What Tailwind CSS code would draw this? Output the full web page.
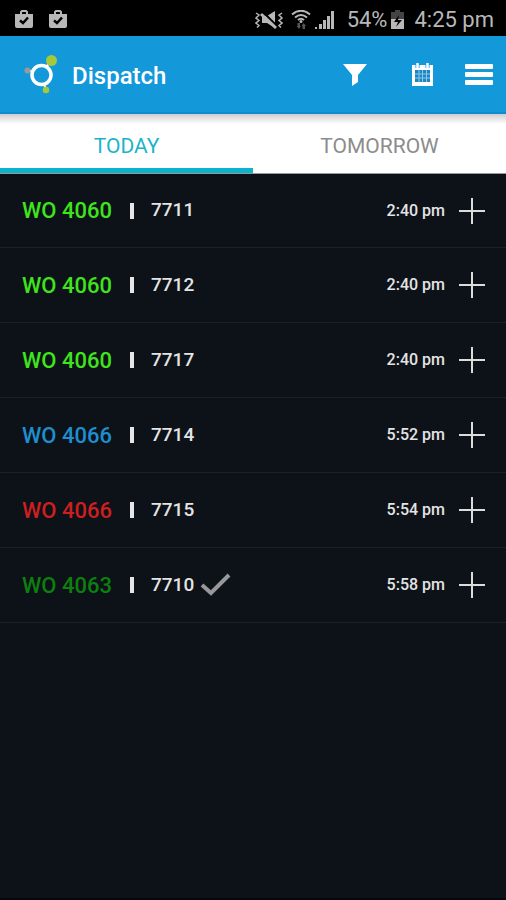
<!DOCTYPE html>
<html lang="en">
<head>
  <meta charset="UTF-8">
  <meta name="viewport" content="width=device-width, initial-scale=1.0">
  <title>Dispatch</title>
  <!-- Tailwind CSS -->
  <script src="https://cdn.jsdelivr.net/npm/@tailwindcss/browser@4"></script>
</head>
<body class="bg-[#0d1118] font-[Roboto,sans-serif] text-white min-h-screen flex flex-col">

  <!-- Status Bar -->
  <div class="h-9 pt-[3px] bg-black flex items-center justify-between pl-[14px] pr-3 text-[#b8b8b8]">
    <div class="flex gap-[14px]">
      <svg class="w-5 h-5" viewBox="0 0 20 20"><path d="M1 4h18v12a2 2 0 0 1-2 2H3a2 2 0 0 1-2-2z" fill="currentColor"/><path d="M7 4V2l1-1h4l1 1v2" fill="none" stroke="currentColor" stroke-width="2"/><path d="M6 10.500l3 2.500 5-5.500" fill="none" stroke="#000" stroke-width="2.500"/></svg>
      <svg class="w-5 h-5" viewBox="0 0 20 20"><path d="M1 4h18v12a2 2 0 0 1-2 2H3a2 2 0 0 1-2-2z" fill="currentColor"/><path d="M7 4V2l1-1h4l1 1v2" fill="none" stroke="currentColor" stroke-width="2"/><path d="M6 10.500l3 2.500 5-5.500" fill="none" stroke="#000" stroke-width="2.500"/></svg>
    </div>
    <div class="flex items-center">
      <!-- Vibrate / muted -->
      <svg class="w-7 h-5" viewBox="0 0 28 20"><path d="M1 3l3 2-3 3 3 2.500-3 2.500 3 2.500-2 2M27 3l-3 2 3 3-3 2.500 3 2.500-3 2.500 2 2" fill="none" stroke="currentColor" stroke-width="1.500"/><path d="M7 6h5l8-5v17l-8-5H7z" fill="currentColor"/><path d="M8 2l14 14" stroke="#000" stroke-width="2"/><path d="M6 4l15 14" stroke="currentColor" stroke-width="3"/></svg>
      <!-- Wifi -->
      <svg class="w-5 h-5 ml-2" viewBox="0 0 20 20"><g fill="none" stroke="currentColor" stroke-width="2"><path d="M1 4.500q9-7.500 18 0"/><path d="M4 7.500q6-5 12 0"/><path d="M7 10q3-2.500 6 0"/></g><circle cx="10" cy="11.500" r="1.500" fill="currentColor"/><path d="M6.500 13H9v3h1l-2 3-2.500-3h1zM11.500 19v-3h-1l2-3 2.500 3h-1v3z" fill="#555"/></svg>
      <!-- Signal -->
      <svg class="w-5 h-5 ml-1" viewBox="0 0 20 20" fill="currentColor"><path d="M0 17h2v2H0zM4 14h3v5H4zM8 10h3v9H8zM12 6h3v13h-3zM16 1h3v18h-3z"/></svg>
      <span class="text-[22px] leading-6 ml-3">54%</span>
      <!-- Battery -->
      <svg class="w-4 h-5 ml-[3px]" viewBox="0 0 16 20"><path d="M5 0h5v2h4v17H1V2h4z" fill="#444"/><path d="M1 9h13v10H1z" fill="currentColor"/><path d="M9 5l-5 7h4l-2 5 6-7H8z" fill="#000"/></svg>
      <span class="text-[22px] leading-6 ml-2">4:25 pm</span>
    </div>
  </div>

  <!-- App Bar -->
  <header class="h-[78px] bg-[#1398da] border-b-2 border-[#0a8dd0] flex items-center justify-between pl-6 pr-[13px]">
    <div class="flex items-center gap-3">
      <svg class="w-9 h-10" viewBox="0 0 36 40"><path d="M18 20L27 6M18 20L3 16M17 20l5 16" stroke="#fff" stroke-width="2"/><circle cx="17.500" cy="21" r="9.500" fill="#1398da" stroke="#fff" stroke-width="3.500"/><circle cx="27.500" cy="6.500" r="5.500" fill="#a4c93a"/><circle cx="3.500" cy="16.500" r="3" fill="#9a9a9a"/><circle cx="22" cy="36" r="3.300" fill="#a4c93a"/></svg>
      <h1 class="text-2xl font-medium pt-1">Dispatch</h1>
    </div>
    <div class="flex items-center">
      <button type="button" aria-label="Filter">
        <svg class="block w-6 h-6" viewBox="0 0 24 24"><path d="M0 2h24l-9 11v7l-6 4V13z" fill="#fff"/></svg>
      </button>
      <button type="button" aria-label="Calendar" class="ml-11">
        <svg class="block w-6 h-6" viewBox="0 0 24 24"><path d="M1 3h21v21H1z" fill="#fff"/><path d="M4 8h15v12H4z" fill="#1d86c4"/><path d="M4 12h15M4 16h15M8 8v12M11.500 8v12M15.500 8v12" stroke="#8cc8ea"/><path d="M6.500 1v5M16.500 1v5" stroke="#1398da" stroke-width="4"/><path d="M6.500 1v5M16.500 1v5" stroke="#fff" stroke-width="2.500"/></svg>
      </button>
      <button type="button" aria-label="Menu" class="ml-[30px]">
        <svg class="block w-7 h-6" viewBox="0 0 28 24" fill="#fff"><rect y="2" width="28" height="5" rx="1"/><rect y="10" width="28" height="5" rx="1"/><rect y="18" width="28" height="5" rx="1"/></svg>
      </button>
    </div>
  </header>

  <!-- Tabs -->
  <nav class="h-[60px] bg-white bg-linear-to-b from-[#cfcccf] to-white to-[10px] border-b border-[#999] grid grid-cols-2 text-[21px]">
    <a href="#today" class="flex items-center justify-center pt-3 border-b-[5px] border-[#0bb4cc] text-[#1bb3cb]">TODAY</a>
    <a href="#tomorrow" class="flex items-center justify-center pt-3 border-b-[5px] border-transparent text-[#8c8c8c]">TOMORROW</a>
  </nav>

  <!-- Work Orders -->
  <main id="today" class="flex-1 border-b-2 border-[#05070b]">
    <ul>
      <li class="h-[74px] flex items-center border-b border-[#1a2129] pl-[22px] pr-5">
        <span class="w-[108px] text-[22px] font-medium text-[#3fe51c]">WO 4060</span>
        <span class="w-1 h-4 bg-[#e6e6e6]"></span>
        <span class="ml-[17px] text-[19px] font-medium text-[#e4e4e4]">7711</span>
        <span class="ml-auto text-base font-medium text-[#e4e4e4]">2:40 pm</span>
        <button type="button" aria-label="Expand 7711" class="ml-[13px]">
          <svg class="block w-7 h-7" viewBox="0 0 28 28"><path d="M14 1v26M1 14h26" stroke="#dcdcdc" stroke-width="2"/></svg>
        </button>
      </li>
      <li class="h-[75px] flex items-center border-b border-[#1a2129] pl-[22px] pr-5">
        <span class="w-[108px] text-[22px] font-medium text-[#3fe51c]">WO 4060</span>
        <span class="w-1 h-4 bg-[#e6e6e6]"></span>
        <span class="ml-[17px] text-[19px] font-medium text-[#e4e4e4]">7712</span>
        <span class="ml-auto text-base font-medium text-[#e4e4e4]">2:40 pm</span>
        <button type="button" aria-label="Expand 7712" class="ml-[13px]">
          <svg class="block w-7 h-7" viewBox="0 0 28 28"><path d="M14 1v26M1 14h26" stroke="#dcdcdc" stroke-width="2"/></svg>
        </button>
      </li>
      <li class="h-[75px] flex items-center border-b border-[#1a2129] pl-[22px] pr-5">
        <span class="w-[108px] text-[22px] font-medium text-[#3fe51c]">WO 4060</span>
        <span class="w-1 h-4 bg-[#e6e6e6]"></span>
        <span class="ml-[17px] text-[19px] font-medium text-[#e4e4e4]">7717</span>
        <span class="ml-auto text-base font-medium text-[#e4e4e4]">2:40 pm</span>
        <button type="button" aria-label="Expand 7717" class="ml-[13px]">
          <svg class="block w-7 h-7" viewBox="0 0 28 28"><path d="M14 1v26M1 14h26" stroke="#dcdcdc" stroke-width="2"/></svg>
        </button>
      </li>
      <li class="h-[75px] flex items-center border-b border-[#1a2129] pl-[22px] pr-5">
        <span class="w-[108px] text-[22px] font-medium text-[#1d8fd0]">WO 4066</span>
        <span class="w-1 h-4 bg-[#e6e6e6]"></span>
        <span class="ml-[17px] text-[19px] font-medium text-[#e4e4e4]">7714</span>
        <span class="ml-auto text-base font-medium text-[#e4e4e4]">5:52 pm</span>
        <button type="button" aria-label="Expand 7714" class="ml-[13px]">
          <svg class="block w-7 h-7" viewBox="0 0 28 28"><path d="M14 1v26M1 14h26" stroke="#dcdcdc" stroke-width="2"/></svg>
        </button>
      </li>
      <li class="h-[75px] flex items-center border-b border-[#1a2129] pl-[22px] pr-5">
        <span class="w-[108px] text-[22px] font-medium text-[#cc1f20]">WO 4066</span>
        <span class="w-1 h-4 bg-[#e6e6e6]"></span>
        <span class="ml-[17px] text-[19px] font-medium text-[#e4e4e4]">7715</span>
        <span class="ml-auto text-base font-medium text-[#e4e4e4]">5:54 pm</span>
        <button type="button" aria-label="Expand 7715" class="ml-[13px]">
          <svg class="block w-7 h-7" viewBox="0 0 28 28"><path d="M14 1v26M1 14h26" stroke="#dcdcdc" stroke-width="2"/></svg>
        </button>
      </li>
      <!-- Completed -->
      <li class="h-[75px] flex items-center border-b border-[#1a2129] pl-[22px] pr-5">
        <span class="w-[108px] text-[22px] font-medium text-[#0b800d]">WO 4063</span>
        <span class="w-1 h-4 bg-[#e6e6e6]"></span>
        <span class="ml-[17px] text-[19px] font-medium text-[#e4e4e4]">7710</span>
        <svg class="w-8 h-6 ml-1.5" viewBox="0 0 32 24"><path d="M2 12l9 8L29 2" fill="none" stroke="#98989b" stroke-width="4"/></svg>
        <span class="ml-auto text-base font-medium text-[#e4e4e4]">5:58 pm</span>
        <button type="button" aria-label="Expand 7710" class="ml-[13px]">
          <svg class="block w-7 h-7" viewBox="0 0 28 28"><path d="M14 1v26M1 14h26" stroke="#dcdcdc" stroke-width="2"/></svg>
        </button>
      </li>
    </ul>
  </main>

</body>
</html>
